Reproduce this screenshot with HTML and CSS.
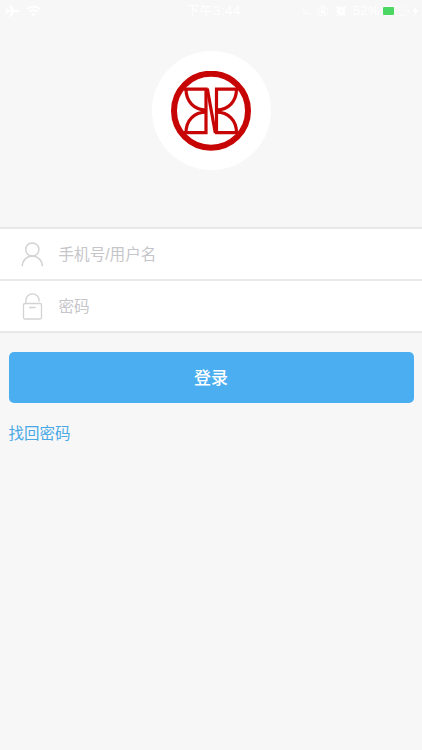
FILE: index.html
```html
<!DOCTYPE html>
<html lang="zh-CN">

<head>
    <meta charset="UTF-8">
    <meta name="viewport" content="width=device-width, initial-scale=1.0">
    <title>登录</title>
    <link rel="stylesheet" href="styles.css">
</head>

<body>

    <!-- 状态栏 -->
    <div class="status-bar">
        <div class="status-left">
            <svg width="15" height="14" viewBox="0 0 15 14" fill="#fff">
                <path d="M14.5 7c0-.7-.8-1.100-1.800-1.100H9.500L5.800.8H4.300l1.700 5.100H3L1.700 4.400H.6L1.300 7 .6 9.600h1.100L3 8.100h3l-1.700 5.100h1.500l3.700-5.100h3.200c1 0 1.800-.4 1.800-1.100z"/>
            </svg>
            <svg width="15" height="12" viewBox="0 0 15 12" fill="none" stroke="#fff" stroke-width="1.900">
                <path d="M.9 4.300a9.500 9.500 0 0 1 13.200 0M3.300 6.900a6 6 0 0 1 8.400 0"/>
                <path d="M7.500 11.500L5.300 9.200a3.200 3.200 0 0 1 4.400 0z" fill="#fff" stroke="none"/>
            </svg>
        </div>
        <div class="status-time">下午3:44</div>
        <div class="status-right">
            <svg class="moon" width="9" height="10" viewBox="0 0 9 10" fill="#fff">
                <path d="M3 1a4 4 0 0 0 5.500 5.500A4.200 4.200 0 1 1 3 1z"/>
            </svg>
            <svg width="12" height="12" viewBox="0 0 12 12" fill="none" stroke="#fff">
                <circle cx="6" cy="6" r="5"/>
                <path d="M4.500 5.500V4.200a1.500 1.500 0 0 1 3 0v1.300"/>
                <path d="M3.700 5.400h4.600v3.200H3.700z" fill="#fff" stroke="none"/>
            </svg>
            <svg width="12" height="12" viewBox="0 0 12 12" fill="none" stroke="#fff">
                <circle cx="6" cy="6.300" r="4.200" fill="#fff" stroke="none"/>
                <path d="M1 3.200L3.200 1.200M11 3.200L8.800 1.200M3 10l-1 1.300M9 10l1 1.300" stroke-width="1.400"/>
                <path d="M6 3.800v2.700h2" stroke="#f7f7f7"/>
            </svg>
            <span class="percent">52%</span>
            <svg width="27" height="10" viewBox="0 0 27 10">
                <rect x=".5" y=".5" width="23" height="9" rx="2" fill="none" stroke="#fbfbfb"/>
                <rect x="0" y="1" width="11" height="8" rx="1" fill="#4bd763"/>
                <path d="M25 3.300c1.300.5 1.300 2.900 0 3.400z" fill="#fff"/>
            </svg>
            <svg width="7" height="10" viewBox="0 0 7 10" fill="#fff">
                <path d="M4.500 0L.5 5.600h2.300L2.200 10l4.300-5.800H4z"/>
            </svg>
        </div>
    </div>

    <div class="logo-container">
        <div class="logo">
            <svg width="80" height="80" viewBox="0 0 80 80" fill="none" stroke="#c80505">
                <circle cx="40" cy="39.700" r="37" stroke-width="6"/>
                <g stroke-width="3.200">
                    <path d="M13 18.100h22v43.500H13"/>
                    <path d="M15 18.100c0 12.200 8 20.900 20 20.900M15 61.600c0-12.200 8-20.400 20-20.400"/>
                    <path d="M67 18.100H45.500v43.500H67"/>
                    <path d="M65.500 18.100c0 12.200-8 20.900-20 20.900M65.500 61.600c0-12.200-8-20.400-20-20.400"/>
                    <path d="M36.300 17.500l8 44.500"/>
                </g>
            </svg>
        </div>
    </div>

    <!-- 登录表单 -->
    <form class="login-form">
        <div class="form-row">
            <svg width="24" height="26" viewBox="0 0 24 26" fill="none" stroke="#d3d3d6" stroke-width="1.500">
                <circle cx="12.300" cy="8.500" r="6.600"/>
                <path d="M2.300 25.300c0-6.300 4.500-10.200 10-10.200s10 3.900 10 10.200"/>
            </svg>
            <input type="text" placeholder="手机号/用户名">
        </div>
        <div class="form-row">
            <svg width="24" height="28" viewBox="0 0 24 28" fill="none" stroke="#d3d3d6" stroke-width="1.300">
                <rect x="3.500" y="11.500" width="18" height="15.500" rx="1.500"/>
                <path d="M5.900 11.500V8.400a6.600 6.600 0 0 1 13.200 0v1M9 15.500h6.700"/>
            </svg>
            <input type="password" placeholder="密码">
        </div>
    </form>

    <button class="login-btn">登录</button>
    <a class="forgot" href="#">找回密码</a>

</body>

</html>
```

FILE: styles.css
```css
* {
    box-sizing: border-box;
}

body {
    margin: 0;
    height: 750px;
    background: #f7f7f7;
    font-family: "Liberation Sans", "Noto Sans CJK SC", sans-serif;
    overflow: hidden;
}

svg {
    display: block;
    flex-shrink: 0;
}

.status-bar {
    display: grid;
    grid-template-columns: 1fr auto 1fr;
    align-items: center;
    height: 22px;
    padding: 0 5px;
    color: #fff;
    font-size: 13px;
    line-height: 22px;
}

.status-left,
.status-right {
    display: flex;
    align-items: center;
    gap: 6px;
}

.status-time {
    padding-left: 5px;
    letter-spacing: 0.5px;
}

.status-right {
    justify-content: flex-end;
    margin-right: -2px;
    gap: 6px;
}

.status-right svg:last-child {
    margin-left: -4px;
}

.moon {
    opacity: 0.5;
}

.percent {
    margin-right: -2px;
}

.logo-container {
    display: flex;
    justify-content: center;
    height: 205px;
    padding-top: 29px;
}

.logo {
    display: flex;
    align-items: center;
    justify-content: center;
    width: 119px;
    height: 119px;
    border-radius: 50%;
    background: #fff;
}

.login-form {
    border-top: 2px solid #e8e8e9;
}

.form-row {
    display: flex;
    align-items: center;
    height: 52px;
    padding: 0 20px;
    background: #fff;
    border-bottom: 2px solid #e8e8e9;
}

.form-row input {
    flex: 1;
    margin-left: 14.500px;
    padding: 2px 0 0;
    border: none;
    outline: none;
    background: none;
    font-family: inherit;
    font-size: 15.600px;
}

.form-row input::placeholder {
    color: #c5c5ca;
}

.login-btn {
    display: block;
    width: 405px;
    height: 51px;
    margin: 18.500px 0 0 8.500px;
    padding: 0 0 2px;
    border: none;
    border-radius: 5px;
    background: #4aaef1;
    color: #fff;
    font-family: inherit;
    font-size: 17px;
    font-weight: 500;
}

.forgot {
    display: inline-block;
    margin: 19px 0 0 8.500px;
    color: #49a9e6;
    font-size: 15.500px;
    line-height: 24px;
    text-decoration: none;
}
```
